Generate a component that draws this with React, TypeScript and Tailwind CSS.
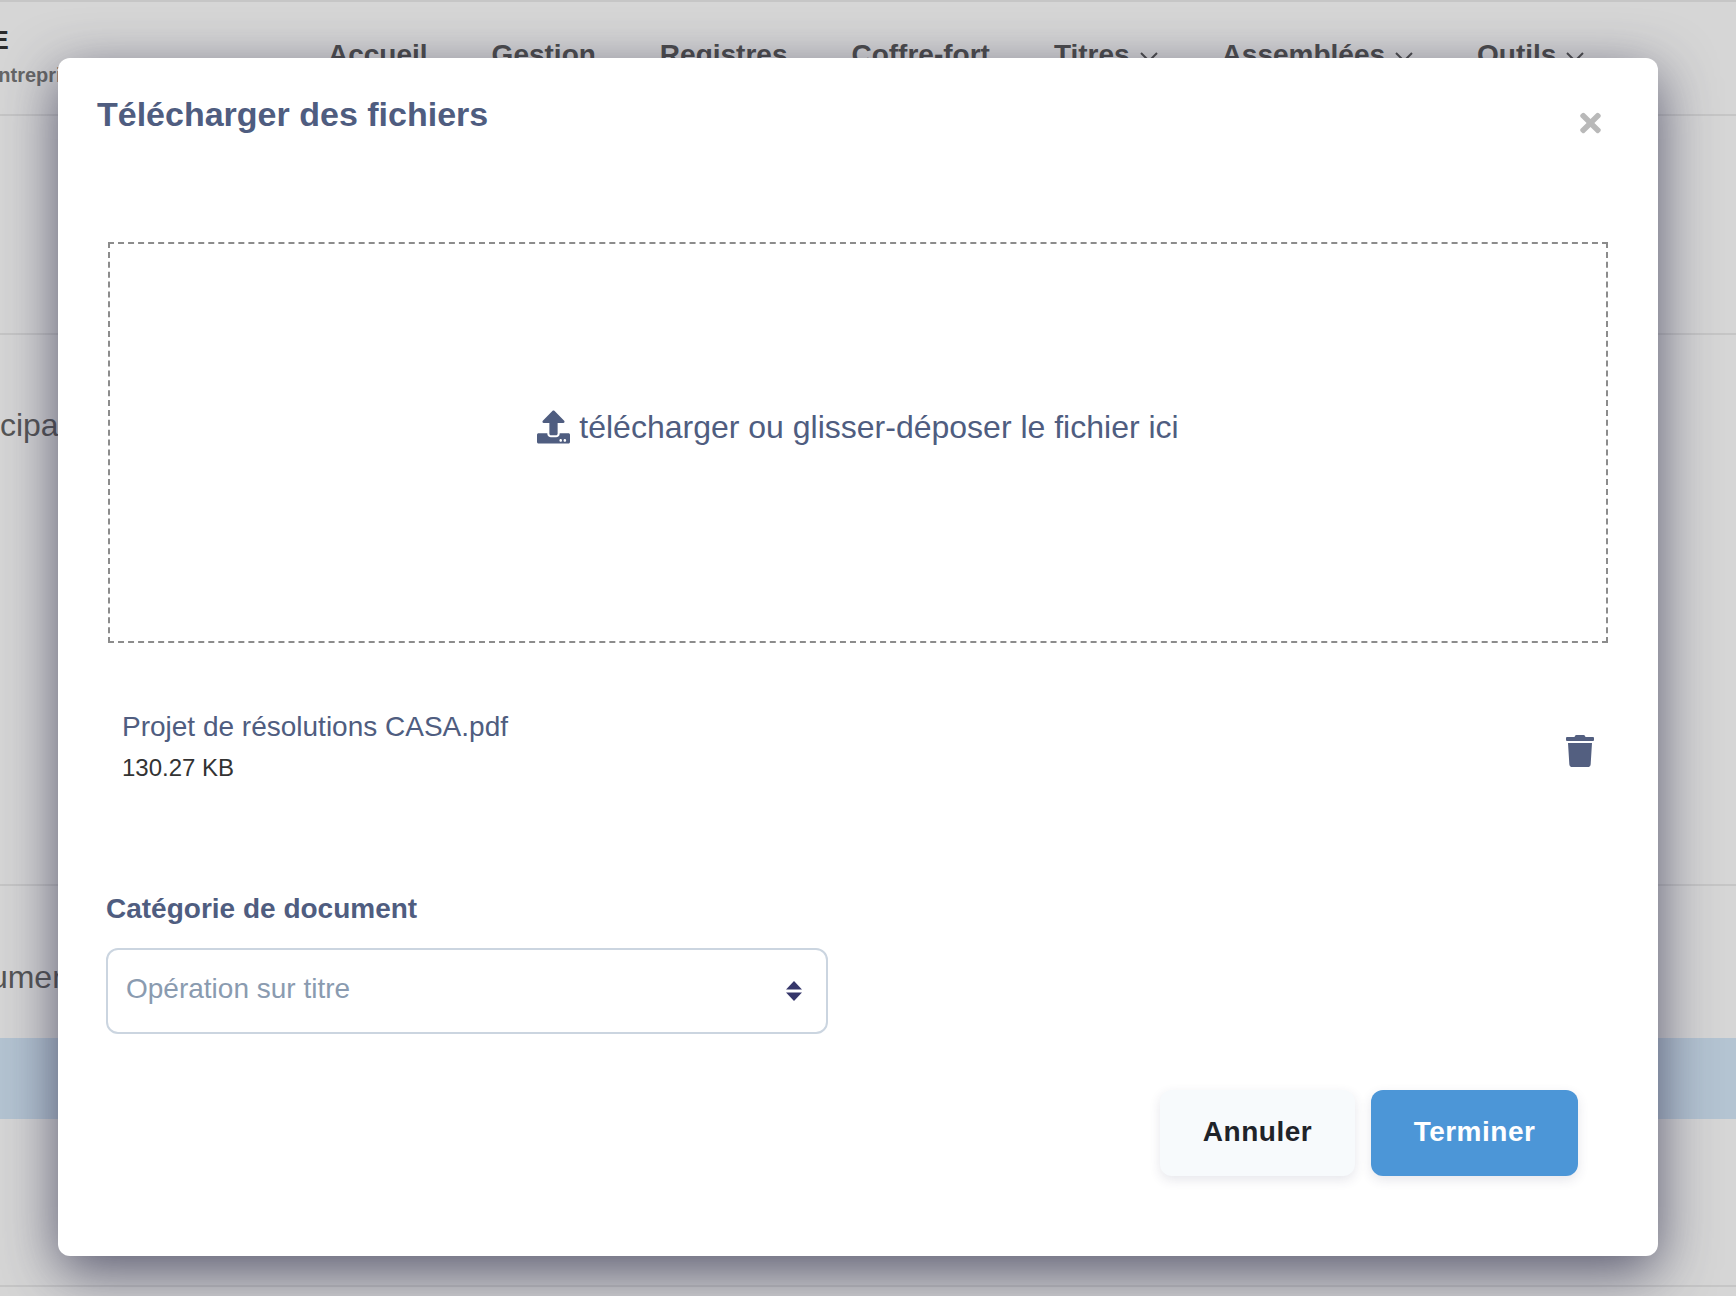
import { FaTimes, FaTrash, FaUpload } from "react-icons/fa";

const navItems = [
  { label: "Accueil", menu: false },
  { label: "Gestion", menu: false },
  { label: "Registres", menu: false },
  { label: "Coffre-fort", menu: false },
  { label: "Titres", menu: true },
  { label: "Assemblées", menu: true },
  { label: "Outils", menu: true },
];

function Page() {
  return (
    <div className="flex h-[1296px] w-[1736px] flex-col overflow-hidden bg-[#d6d6d6] text-[#4b4b4b]">
      <header className="flex h-[116px] shrink-0 items-start border-t-2 border-b-2 border-[#c6c6c6]">
        <div className="mt-[21px] w-[328px] shrink-0">
          <div className="ml-[-151px] whitespace-nowrap text-[25px] font-bold leading-[34px] text-[#2a2a2a]">ENTREPRISE</div>
          <div className="ml-[-15px] mt-[4px] whitespace-nowrap text-[20px] font-bold leading-[28px] text-[#666]">Entreprise</div>
        </div>
        <nav className="mt-[35px] flex gap-[64px]">
          {navItems.map((item) => (
            <span key={item.label} className="flex items-center gap-[10px] text-[28px] font-bold leading-[36px]">
              {item.label}
              {item.menu && (
                <svg viewBox="0 0 18 10" className="mt-[4px] h-[10px] w-[18px]" fill="none" stroke="currentColor" strokeWidth="2">
                  <path d="M1 1l8 8 8-8" />
                </svg>
              )}
            </span>
          ))}
        </nav>
      </header>
      <section className="flex h-[219px] shrink-0 border-b-2 border-[#c6c6c6]" />
      <section className="flex h-[551px] shrink-0 border-b-2 border-[#c6c6c6] pt-[72px] text-[32px] leading-[36px] text-[#555]">
        <span className="ml-[-57px]">Principal</span>
      </section>
      <section className="flex h-[152px] shrink-0 pt-[73px] text-[32px] leading-[36px] text-[#555]">
        <span className="ml-[-67px]">Documents</span>
      </section>
      <div className="h-[81px] shrink-0 bg-[#b4c4d2]" />
      <div className="h-[168px] shrink-0 border-b-2 border-[#c6c6c6]" />
    </div>
  );
}

export default function App() {
  return (
    <div className="relative h-[1296px] w-[1736px] overflow-hidden font-['Liberation_Sans',Arial,sans-serif]">
      <Page />
      <div className="absolute left-[58px] top-[58px] flex h-[1198px] w-[1600px] flex-col rounded-[12px] bg-white shadow-[0_16px_56px_rgba(40,40,70,0.72)]">
        <div className="flex items-start justify-between pl-[39px] pr-[55px] pt-[33px]">
          <h2 className="text-[34px] font-bold leading-[46px] text-[#4f5d80]">Télécharger des fichiers</h2>
          <FaTimes className="mt-[17px] h-[30px] w-[25px] text-[#b9b9b9]" />
        </div>
        <div className="mx-[50px] mt-[104px] flex h-[401px] items-center justify-center border-2 border-dashed border-[#8c8c8c] pb-[32px]">
          <div className="flex items-center gap-[9px] text-[32px] leading-[40px] text-[#4f5d80]">
            <FaUpload className="h-[34px] w-[33px]" />
            <span>télécharger ou glisser-déposer le fichier ici</span>
          </div>
        </div>
        <div className="mt-[64px] flex items-center justify-between px-[64px]">
          <div>
            <div className="text-[28px] leading-[40px] text-[#4f5d80]">Projet de résolutions CASA.pdf</div>
            <div className="mt-[3px] text-[24px] leading-[36px] text-[#333]">130.27 KB</div>
          </div>
          <FaTrash className="mt-[9px] h-[32px] w-[28px] text-[#535f80]" />
        </div>
        <div className="mt-[105px] pl-[48px]">
          <label className="block text-[28px] font-bold leading-[36px] text-[#4f5d80]">Catégorie de document</label>
          <div className="mt-[21px] flex h-[86px] w-[722px] items-center justify-between rounded-[12px] border-2 border-[#cbd5e0] pl-[18px] pr-[24px]">
            <span className="pb-[5px] text-[28px] leading-[36px] text-[#8a9bb0]">Opération sur titre</span>
            <svg viewBox="0 0 16 20" className="h-[20px] w-[16px] text-[#35366a]" fill="currentColor">
              <path d="M8 0 16 8.500H0z" />
              <path d="M0 11.500H16L8 20z" />
            </svg>
          </div>
        </div>
        <div className="mt-[56px] flex justify-end gap-[16px] pr-[80px]">
          <button className="h-[86px] w-[195px] rounded-[12px] bg-[#f7fafc] pb-[3px] text-[28px] font-bold tracking-[0.5px] text-[#1f2329] shadow-[0_4px_12px_rgba(50,50,93,0.12)]">
            Annuler
          </button>
          <button className="h-[86px] w-[207px] rounded-[12px] bg-[#4c96d7] pb-[3px] text-[28px] font-bold tracking-[0.5px] text-white shadow-[0_4px_12px_rgba(50,50,93,0.12)]">
            Terminer
          </button>
        </div>
      </div>
    </div>
  );
}
